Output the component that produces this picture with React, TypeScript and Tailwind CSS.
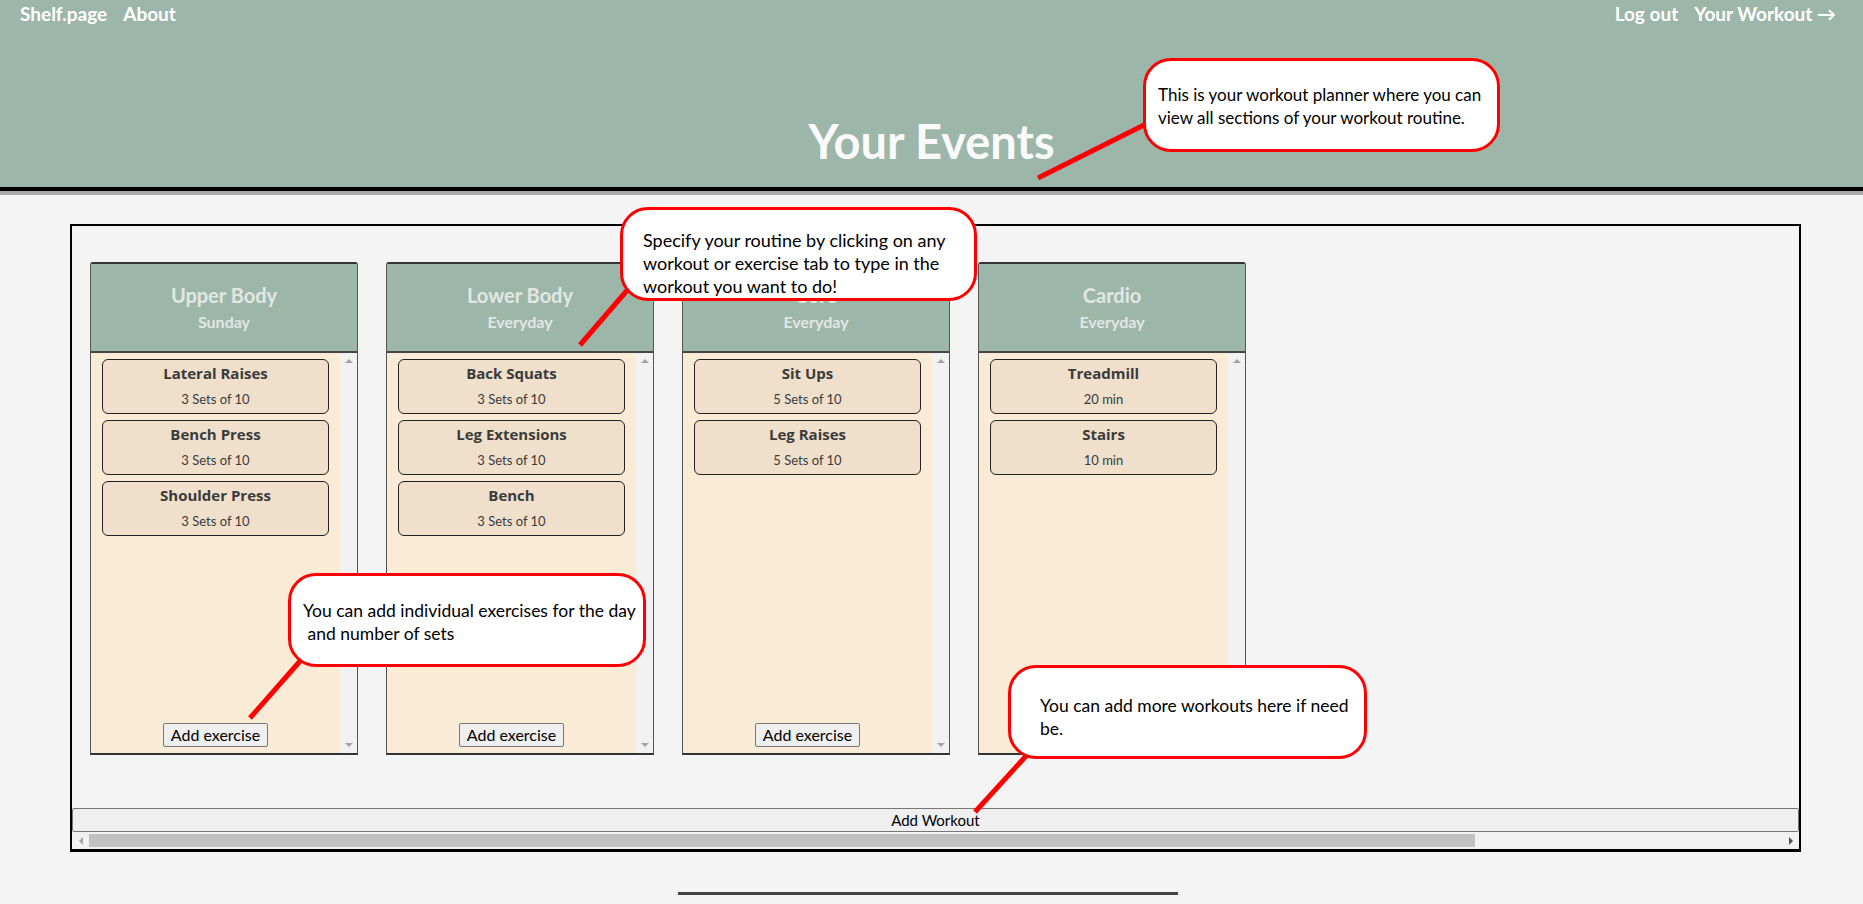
import React from "react"

interface Exercise {
  name: string
  sets: string
}

interface Workout {
  title: string
  day: string
  exercises: Exercise[]
}

const workouts: Workout[] = [
  {
    title: "Upper Body",
    day: "Sunday",
    exercises: [
      { name: "Lateral Raises", sets: "3 Sets of 10" },
      { name: "Bench Press", sets: "3 Sets of 10" },
      { name: "Shoulder Press", sets: "3 Sets of 10" },
    ],
  },
  {
    title: "Lower Body",
    day: "Everyday",
    exercises: [
      { name: "Back Squats", sets: "3 Sets of 10" },
      { name: "Leg Extensions", sets: "3 Sets of 10" },
      { name: "Bench", sets: "3 Sets of 10" },
    ],
  },
  {
    title: "Core",
    day: "Everyday",
    exercises: [
      { name: "Sit Ups", sets: "5 Sets of 10" },
      { name: "Leg Raises", sets: "5 Sets of 10" },
    ],
  },
  {
    title: "Cardio",
    day: "Everyday",
    exercises: [
      { name: "Treadmill", sets: "20 min" },
      { name: "Stairs", sets: "10 min" },
    ],
  },
]

function WorkoutColumn({ workout }: { workout: Workout }) {
  return (
    <div className="w-[268px] h-[493px] shrink-0 flex flex-col border border-[#555] border-t-2 border-b-2 border-t-[#333] border-b-[#333] rounded-t-[3px]">
      <div className="h-[89px] shrink-0 bg-[#9db6aa] border-b-2 border-[#444] flex flex-col items-center pt-[19px] text-[#e2e7e2] font-bold">
        <div className="text-[20px] leading-[24px]">{workout.title}</div>
        <div className="text-[16px] leading-[18px] mt-[6px]">{workout.day}</div>
      </div>
      <div className="flex-1 flex bg-[#faebd7]">
        <div className="flex-1 flex flex-col px-[11px] pt-[6px] pb-[6px]">
          <div className="flex flex-col gap-[6px]">
            {workout.exercises.map((ex) => (
              <div
                key={ex.name}
                className="h-[55px] rounded-[6px] border border-[#222] bg-[#efdfcb] flex flex-col items-center pt-[4px] text-[#3b3b3b]"
              >
                <div className="font-['Open_Sans',sans-serif] text-[15px] leading-[18px] font-bold">{ex.name}</div>
                <div className="text-[13px] leading-[16px] mt-[9px]">{ex.sets}</div>
              </div>
            ))}
          </div>
          <div className="flex-1" />
          <div className="flex justify-center">
            <button className="h-[24px] px-[7px] bg-[#efefef] border border-[#767676] rounded-[2px] text-[16px] leading-[20px] text-black">
              Add exercise
            </button>
          </div>
        </div>
        {/* fake scrollbar track */}
        <div className="w-[17px] bg-[#f1f1f1] flex flex-col items-center justify-between py-[6px]">
          <span className="w-0 h-0 border-x-[4px] border-x-transparent border-b-[4px] border-b-[#a3a3a3]" />
          <span className="w-0 h-0 border-x-[4px] border-x-transparent border-t-[4px] border-t-[#a3a3a3]" />
        </div>
      </div>
    </div>
  )
}

function Callout({ className, children }: { className: string; children: React.ReactNode }) {
  return (
    <div
      className={`absolute z-20 bg-white border-[3px] border-[#ff0000] rounded-[28px] text-black whitespace-nowrap leading-[23px] ${className}`}
    >
      {children}
    </div>
  )
}

export default function App() {
  return (
    <div className="relative w-full min-h-[904px] bg-[#f4f4f4] overflow-hidden font-['Lato',sans-serif]">
      {/* Header */}
      <header className="h-[187px] bg-[#9db6aa] flex flex-col">
        <nav className="h-[28px] flex items-center justify-between pl-[20px] pr-[27px] text-[19px] font-bold text-white">
          <div className="flex gap-[16px]">
            <span>Shelf.page</span>
            <span>About</span>
          </div>
          <div className="flex gap-[16px]">
            <span>Log out</span>
            <span>Your Workout →</span>
          </div>
        </nav>
        <h1 className="mt-[85px] text-center text-[47px] leading-[56px] font-bold text-[#fafafa]">Your Events</h1>
      </header>
      <div className="h-[4px] bg-black" />
      <div className="h-[4px] bg-[#aaa]" />

      {/* Planner */}
      <main className="mt-[29px] ml-[70px] w-[1731px] border-2 border-b-[3px] border-black">
        <div className="flex gap-[28px] pl-[18px] pt-[36px]">
          {workouts.map((w) => (
            <WorkoutColumn key={w.title} workout={w} />
          ))}
        </div>
        <button className="mt-[53px] w-full h-[24px] bg-[#efefef] border border-[#767676] rounded-[2px] text-[15px] leading-[20px] text-black">
          Add Workout
        </button>
        {/* fake horizontal scrollbar */}
        <div className="h-[17px] flex items-center bg-[#f1f1f1]">
          <div className="w-[17px] flex justify-center">
            <span className="w-0 h-0 border-y-[4px] border-y-transparent border-r-[4px] border-r-[#a3a3a3]" />
          </div>
          <div className="flex-1 h-full flex items-center">
            <div className="w-[1386px] h-[13px] bg-[#c1c1c1]" />
          </div>
          <div className="w-[17px] flex justify-center">
            <span className="w-0 h-0 border-y-[4px] border-y-transparent border-l-[4px] border-l-[#505050]" />
          </div>
        </div>
      </main>

      <div className="mt-[40px] ml-[678px] w-[500px] h-[3px] bg-[#444]" />

      {/* annotation pointers */}
      <svg className="absolute left-0 top-0 z-10 pointer-events-none" width="1863" height="904">
        <g stroke="#ff0000" strokeWidth="5" strokeLinecap="butt">
          <line x1="1150" y1="122" x2="1038" y2="178" />
          <line x1="630" y1="287" x2="580" y2="345" />
          <line x1="301" y1="660" x2="250" y2="718" />
          <line x1="1027" y1="755" x2="975" y2="812" />
        </g>
      </svg>

      <Callout className="left-[1143px] top-[58px] w-[357px] h-[94px] pt-[22px] pl-[12px] text-[17px]">
        This is your workout planner where you can
        <br />
        view all sections of your workout routine.
      </Callout>
      <Callout className="left-[620px] top-[207px] w-[357px] h-[94px] pt-[19px] pl-[20px] text-[18px] leading-[22px]">
        Specify your routine by clicking on any
        <br />
        workout or exercise tab to type in the
        <br />
        workout you want to do!
      </Callout>
      <Callout className="left-[288px] top-[573px] w-[358px] h-[94px] pt-[23px] pl-[12px] text-[17.5px]">
        You can add individual exercises for the day
        <br />
        &nbsp;and number of sets
      </Callout>
      <Callout className="left-[1008px] top-[665px] w-[359px] h-[94px] pt-[26px] pl-[29px] text-[17.5px]">
        You can add more workouts here if need
        <br />
        be.
      </Callout>
    </div>
  )
}
